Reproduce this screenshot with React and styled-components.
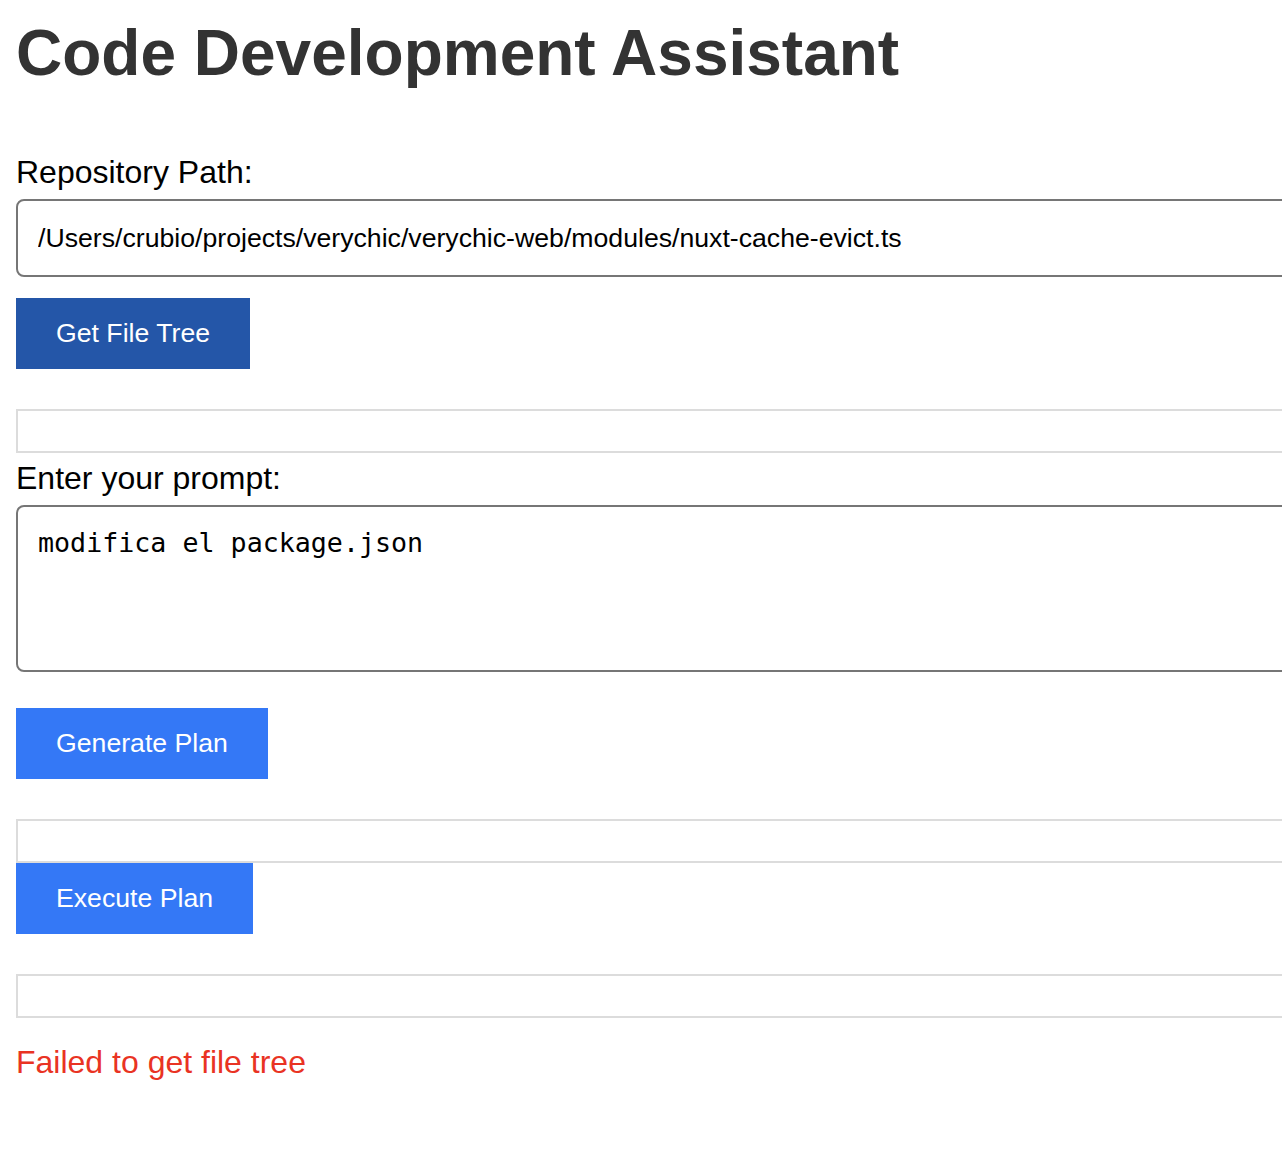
import styled, { createGlobalStyle } from "styled-components";

const GlobalStyle = createGlobalStyle`
  body {
    margin: 0;
    font-family: "Liberation Sans", Arial, sans-serif;
    background: #fff;
    color: #000;
  }
`;

const StyledPage = styled.div`
  overflow: hidden;
  padding: 16px;
`;

const StyledTitle = styled.h1`
  margin: 0 0 64px;
  font-size: 64px;
  font-weight: bold;
  color: #333;
`;

const StyledSection = styled.div`
  display: flex;
  flex-direction: column;
  align-items: flex-start;
`;

const StyledLabel = styled.label`
  display: block;
  font-size: 32px;
  margin-top: ${(p) => p.$top || 0}px;
  margin-bottom: 8px;
`;

const StyledInput = styled.input`
  display: block;
  box-sizing: content-box;
  width: 100%;
  height: 34px;
  padding: 20px;
  border: 2px solid #767676;
  border-radius: 8px;
  font-family: "Liberation Sans", Arial, sans-serif;
  font-size: 26.67px;
  color: #000;
  outline: none;
`;

const StyledTextarea = styled.textarea`
  display: block;
  box-sizing: content-box;
  width: 100%;
  height: 123px;
  padding: 20px;
  border: 2px solid #767676;
  border-radius: 8px;
  font-family: "DejaVu Sans Mono", "Liberation Mono", monospace;
  font-size: 26.67px;
  color: #000;
  resize: none;
  outline: none;
`;

const StyledButton = styled.button`
  display: block;
  margin-top: ${(p) => p.$top}px;
  padding: 0 40px;
  height: 71px;
  border: none;
  border-radius: 0;
  background: ${(p) => (p.$active ? "#2456a8" : "#3478f6")};
  color: #fff;
  font-family: "Liberation Sans", Arial, sans-serif;
  font-size: 26.67px;
  cursor: pointer;
`;

const StyledOutput = styled.pre`
  box-sizing: border-box;
  width: calc(100% + 44px);
  height: 43px;
  margin: ${(p) => p.$top}px 0 0;
  padding: 20px;
  border: 2px solid #dcdcdc;
  background: #fff;
`;

const StyledError = styled.p`
  margin: 26px 0 0;
  font-size: 32px;
  color: #e93323;
`;

export default function App() {
  return (
    <StyledPage>
      <GlobalStyle />
      <StyledTitle>Code Development Assistant</StyledTitle>
      <StyledSection>
        <StyledLabel htmlFor="repoPath">Repository Path:</StyledLabel>
        <StyledInput
          id="repoPath"
          type="text"
          defaultValue="/Users/crubio/projects/verychic/verychic-web/modules/nuxt-cache-evict.ts"
        />
        <StyledButton $active $top={21}>
          Get File Tree
        </StyledButton>
        <StyledOutput $top={40} />
      </StyledSection>
      <StyledSection>
        <StyledLabel htmlFor="prompt" $top={7}>
          Enter your prompt:
        </StyledLabel>
        <StyledTextarea id="prompt" defaultValue="modifica el package.json" />
        <StyledButton $top={36}>Generate Plan</StyledButton>
        <StyledOutput $top={40} />
        <StyledButton $top={0}>Execute Plan</StyledButton>
        <StyledOutput $top={40} />
      </StyledSection>
      <StyledError>Failed to get file tree</StyledError>
    </StyledPage>
  );
}
